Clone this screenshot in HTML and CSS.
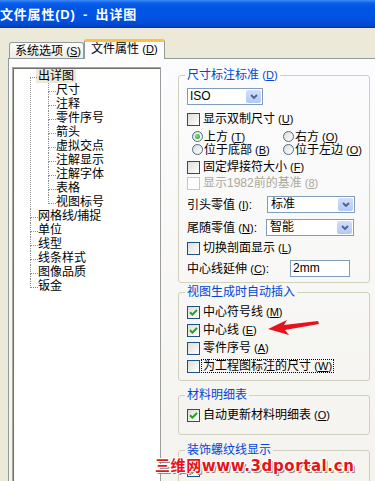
FILE: index.html
```html
<!DOCTYPE html>
<html lang="zh-CN">
<head>
    <meta charset="utf-8">
    <link rel="stylesheet" href="styles.css">
</head>
<body>
    <div class="titlebar">文件属性(D) - 出详图</div>

    <div class="tabstrip">
        <div class="tab">系统选项 <span class="key">(<u>S</u>)</span></div>
        <div class="tab active">文件属性 <span class="key">(<u>D</u>)</span></div>
    </div>

    <div class="window">
        <div class="panel">
            <!-- left: tree of pages -->
            <div class="tree">
                <ul class="tree-root">
                    <li><span class="sel">出详图</span>
                        <ul>
                            <li>尺寸</li>
                            <li>注释</li>
                            <li>零件序号</li>
                            <li>箭头</li>
                            <li>虚拟交点</li>
                            <li>注解显示</li>
                            <li>注解字体</li>
                            <li>表格</li>
                            <li>视图标号</li>
                        </ul>
                    </li>
                    <li>网格线/捕捉</li>
                    <li>单位</li>
                    <li>线型</li>
                    <li>线条样式</li>
                    <li>图像品质</li>
                    <li>钣金</li>
                </ul>
            </div>

            <!-- right: option groups -->
            <div class="options">
                <fieldset class="group g1">
                    <legend>尺寸标注标准 <span class="key">(<u>D</u>)</span></legend>
                    <div class="combo iso"><span class="val">ISO</span><span class="btn"><svg width="8" height="5" viewBox="0 0 8 5"><path d="M1 1 L4 4 L7 1" fill="none" stroke="#4D6185" stroke-width="1.8"/></svg></span></div>
                    <div class="check r1"><span class="cb"></span>显示双制尺寸 <span class="key">(<u>U</u>)</span></div>
                    <div class="radios">
                        <div class="rb"><span class="radio on"></span>上方 <span class="key">(<u>T</u>)</span></div>
                        <div class="rb"><span class="radio"></span>右方 <span class="key">(<u>O</u>)</span></div>
                        <div class="rb"><span class="radio"></span>位于底部 <span class="key">(<u>B</u>)</span></div>
                        <div class="rb"><span class="radio"></span>位于左边 <span class="key">(<u>O</u>)</span></div>
                    </div>
                    <div class="check r2"><span class="cb"></span>固定焊接符大小 <span class="key">(<u>F</u>)</span></div>
                    <div class="check r3 disabled"><span class="cb"></span>显示1982前的基准 <span class="key">(<u>8</u>)</span></div>
                    <div class="field f1">
                        <span class="lbl">引头零值 <span class="key">(<u>I</u>)</span>:</span>
                        <div class="combo wide"><span class="val">标准</span><span class="btn"><svg width="8" height="5" viewBox="0 0 8 5"><path d="M1 1 L4 4 L7 1" fill="none" stroke="#4D6185" stroke-width="1.8"/></svg></span></div>
                    </div>
                    <div class="field f2">
                        <span class="lbl">尾随零值 <span class="key">(<u>N</u>)</span>:</span>
                        <div class="combo wide"><span class="val">智能</span><span class="btn"><svg width="8" height="5" viewBox="0 0 8 5"><path d="M1 1 L4 4 L7 1" fill="none" stroke="#4D6185" stroke-width="1.8"/></svg></span></div>
                    </div>
                    <div class="check r4"><span class="cb"></span>切换剖面显示 <span class="key">(<u>L</u>)</span></div>
                    <div class="field f3">
                        <span class="lbl long">中心线延伸 <span class="key">(<u>C</u>)</span>:</span>
                        <span class="textbox">2mm</span>
                    </div>
                </fieldset>

                <fieldset class="group g2">
                    <legend>视图生成时自动插入</legend>
                    <div class="check tall first"><span class="cb on"><svg width="9" height="9" viewBox="0 0 9 9"><path d="M1 4.2 L3.4 6.6 L8 2" fill="none" stroke="#21A121" stroke-width="2"/></svg></span>中心符号线 <span class="key">(<u>M</u>)</span></div>
                    <div class="check tall"><span class="cb on"><svg width="9" height="9" viewBox="0 0 9 9"><path d="M1 4.2 L3.4 6.6 L8 2" fill="none" stroke="#21A121" stroke-width="2"/></svg></span>中心线 <span class="key">(<u>E</u>)</span></div>
                    <div class="check tall"><span class="cb"></span>零件序号 <span class="key">(<u>A</u>)</span></div>
                    <div class="check tall"><span class="cb"></span><span class="focus">为工程图标注的尺寸 <span class="key">(<u>W</u>)</span></span></div>
                </fieldset>

                <fieldset class="group g3">
                    <legend>材料明细表</legend>
                    <div class="check tall first"><span class="cb on"><svg width="9" height="9" viewBox="0 0 9 9"><path d="M1 4.2 L3.4 6.6 L8 2" fill="none" stroke="#21A121" stroke-width="2"/></svg></span>自动更新材料明细表 <span class="key">(<u>O</u>)</span></div>
                </fieldset>

                <fieldset class="group g4">
                    <legend>装饰螺纹线显示</legend>
                    <div class="check tall first"><span class="cb on"><svg width="9" height="9" viewBox="0 0 9 9"><path d="M1 4.2 L3.4 6.6 L8 2" fill="none" stroke="#21A121" stroke-width="2"/></svg></span></div>
                </fieldset>
            </div>
        </div>
    </div>

    <!-- annotation drawn over the dialog -->
    <svg class="arrow" width="60" height="22" viewBox="0 0 60 22">
        <polygon points="3,13 22,4 19,9 53,5 54,8 20,14 24,19" fill="#E5141C"/>
    </svg>
    <div class="watermark">三维网www.3dportal.cn</div>
</body>
</html>
```

FILE: styles.css
```css
* {
    box-sizing: border-box;
}

body {
    position: relative;
    margin: 0;
    width: 375px;
    height: 481px;
    overflow: hidden;
    background-color: #ECE9D8;
    font-family: "Liberation Sans", "Noto Sans CJK SC", sans-serif;
    font-size: 12px;
    line-height: 14px;
    color: #000;
}

u {
    text-decoration: underline;
}

/* the "(X)" access key after a label */
.key {
    font-size: 11px;
}

/* title bar */
.titlebar {
    height: 28px;
    padding-top: 1px;
    line-height: 27px;
    color: #fff;
    font-size: 13px;
    font-weight: bold;
    letter-spacing: 0.8px;
    white-space: nowrap;
    word-spacing: 3px;
    background: linear-gradient(#3B8CF8 0, #0C5FEA 3px, #0055E5 7px, #0053E1 20px, #0046CC 25px, #0039B0 28px);
}

/* tabs */
.tabstrip {
    display: flex;
    align-items: flex-end;
    height: 30px;
    padding-left: 9px;
}

.tab {
    width: 75px;
    height: 16px;
    padding: 1px 0 0 5px;
    border: 1px solid #919B9C;
    border-bottom: none;
    border-radius: 3px 3px 0 0;
    background: linear-gradient(#FFFFFF, #ECEBE6);
    white-space: nowrap;
}

.tab.active {
    position: relative;
    z-index: 1;
    width: 81px;
    height: 20px;
    margin-bottom: -1px;
    padding: 0 0 0 6px;
    border-top: 3px solid #FBC145;
    background: #FCFCFE;
}

/* page panel */
.window {
    padding-left: 8px;
}

.panel {
    display: flex;
    align-items: flex-start;
    height: 423px;
    border-top: 1px solid #919B9C;
    border-left: 1px solid #919B9C;
    background: linear-gradient(#FCFCFE, #F4F3EE);
}

/* tree */
.tree {
    width: 149px;
    height: 430px;
    margin: 8px 0 0 3px;
    border: 1px solid #ACA899;
    border-right-color: #9C9C9C;
    box-shadow: inset 1px 1px 0 #716F64;
    background-color: #fff;
}

.tree ul {
    list-style: none;
    margin: 0;
    padding: 0;
}

.tree .tree-root {
    padding: 1px 0 0 17px;
}

.tree li ul {
    padding-left: 10px;
}

.tree li {
    position: relative;
    padding-left: 8px;
    line-height: 14px;
    white-space: nowrap;
}

.tree li::before {
    content: "";
    position: absolute;
    left: 0;
    top: 0;
    width: 7px;
    height: 8px;
    border-left: 1px dotted #8C8C8C;
    border-bottom: 1px dotted #8C8C8C;
}

.tree li:not(:last-child)::after {
    content: "";
    position: absolute;
    left: 0;
    top: 8px;
    bottom: 0;
    border-left: 1px dotted #8C8C8C;
}

.tree-root > li:first-child::before {
    border-left: none;
}

.sel {
    display: inline-block;
    margin-left: -2px;
    padding: 0 2px;
    background-color: #ECE9D8;
}

/* option groups */
.options {
    width: 192px;
    margin: 9px 0 0 17px;
}

.group {
    margin: 0;
    min-width: 0;
    padding: 0 6px 5px 8px;
    border: 1px solid #D0D0BF;
    border-radius: 3px;
}

.group legend {
    margin-left: -2px;
    padding: 0 2px;
    line-height: 14px;
    color: #0046D5;
}

.g2 {
    margin-top: 2px;
}

.g3 {
    margin-top: 7px;
    padding-bottom: 10px;
}

.g4 {
    margin-top: 8px;
}

.check {
    display: flex;
    align-items: center;
    gap: 3px;
    height: 14px;
    white-space: nowrap;
}

.check.tall {
    height: 18px;
}

.check.first {
    margin-top: 4px;
}

.r1 { margin-top: 7px; }
.r2 { margin-top: 4px; }
.r3 { margin-top: 2px; }
.r4 { margin-top: 5px; }

.cb {
    display: flex;
    align-items: center;
    justify-content: center;
    flex: none;
    width: 13px;
    height: 13px;
    border: 1px solid #1C5180;
    background: linear-gradient(135deg, #DCDCD7, #FFFFFF);
}

.disabled {
    color: #ACA899;
}

.disabled .cb {
    border-color: #CAC8BB;
    background: #fff;
}

.focus {
    margin-left: -2px;
    padding: 0 1px;
    line-height: 12px;
    border: 1px dotted #000;
}

.radios {
    display: grid;
    grid-template-columns: 91px auto;
    grid-auto-rows: 13px;
    margin-top: 4px;
    padding-left: 5px;
}

.rb {
    display: flex;
    align-items: center;
    gap: 1px;
    height: 13px;
    line-height: 12px;
    white-space: nowrap;
}

.rb .key {
    margin-left: 2px;
}

.radio {
    display: flex;
    align-items: center;
    justify-content: center;
    flex: none;
    width: 11px;
    height: 11px;
    border: 1px solid #4A6C8C;
    border-radius: 50%;
    background: linear-gradient(135deg, #DCDCD7, #FFFFFF);
}

.radio.on::after {
    content: "";
    width: 5px;
    height: 5px;
    border-radius: 50%;
    background: radial-gradient(circle at 35% 35%, #7BE27B, #21A121);
}

/* combo boxes and text fields */
.combo {
    display: flex;
    height: 17px;
    border: 1px solid #7F9DB9;
    background-color: #fff;
}

.combo.iso {
    width: 76px;
    margin-top: 6px;
}

.combo.wide {
    width: 88px;
}

.combo .val {
    flex: 1;
    padding-left: 2px;
    line-height: 15px;
}

.combo.wide .val {
    padding-left: 3px;
}

.combo .btn {
    display: flex;
    align-items: center;
    justify-content: center;
    width: 15px;
    margin: 1px;
    border-radius: 2px;
    background: linear-gradient(#D2DEFD, #B4C8F6);
}

.field {
    display: flex;
    align-items: center;
    height: 17px;
    margin-top: 6px;
    white-space: nowrap;
}

.field .lbl {
    width: 80px;
}

.field .lbl.long {
    width: 103px;
}

.f2 .lbl {
    width: 79px;
}

.f3 {
    margin-top: 5px;
}

.textbox {
    width: 60px;
    height: 17px;
    padding-left: 2px;
    line-height: 15px;
    border: 1px solid #7F9DB9;
    background-color: #fff;
}

/* overlays */
.arrow {
    position: absolute;
    left: 265px;
    top: 316px;
}

.watermark {
    position: absolute;
    left: 155px;
    top: 458px;
    font-family: "DejaVu Sans", "Noto Sans CJK SC", sans-serif;
    font-size: 15px;
    font-weight: bold;
    line-height: 17px;
    letter-spacing: 0.6px;
    color: #E5141C;
    white-space: nowrap;
    text-shadow: 1px 0 #fff, -1px 0 #fff, 0 1px #fff, 0 -1px #fff,
        1px 1px #fff, -1px -1px #fff, 1px -1px #fff, -1px 1px #fff,
        2px 2px #8A8A8A;
}
```
